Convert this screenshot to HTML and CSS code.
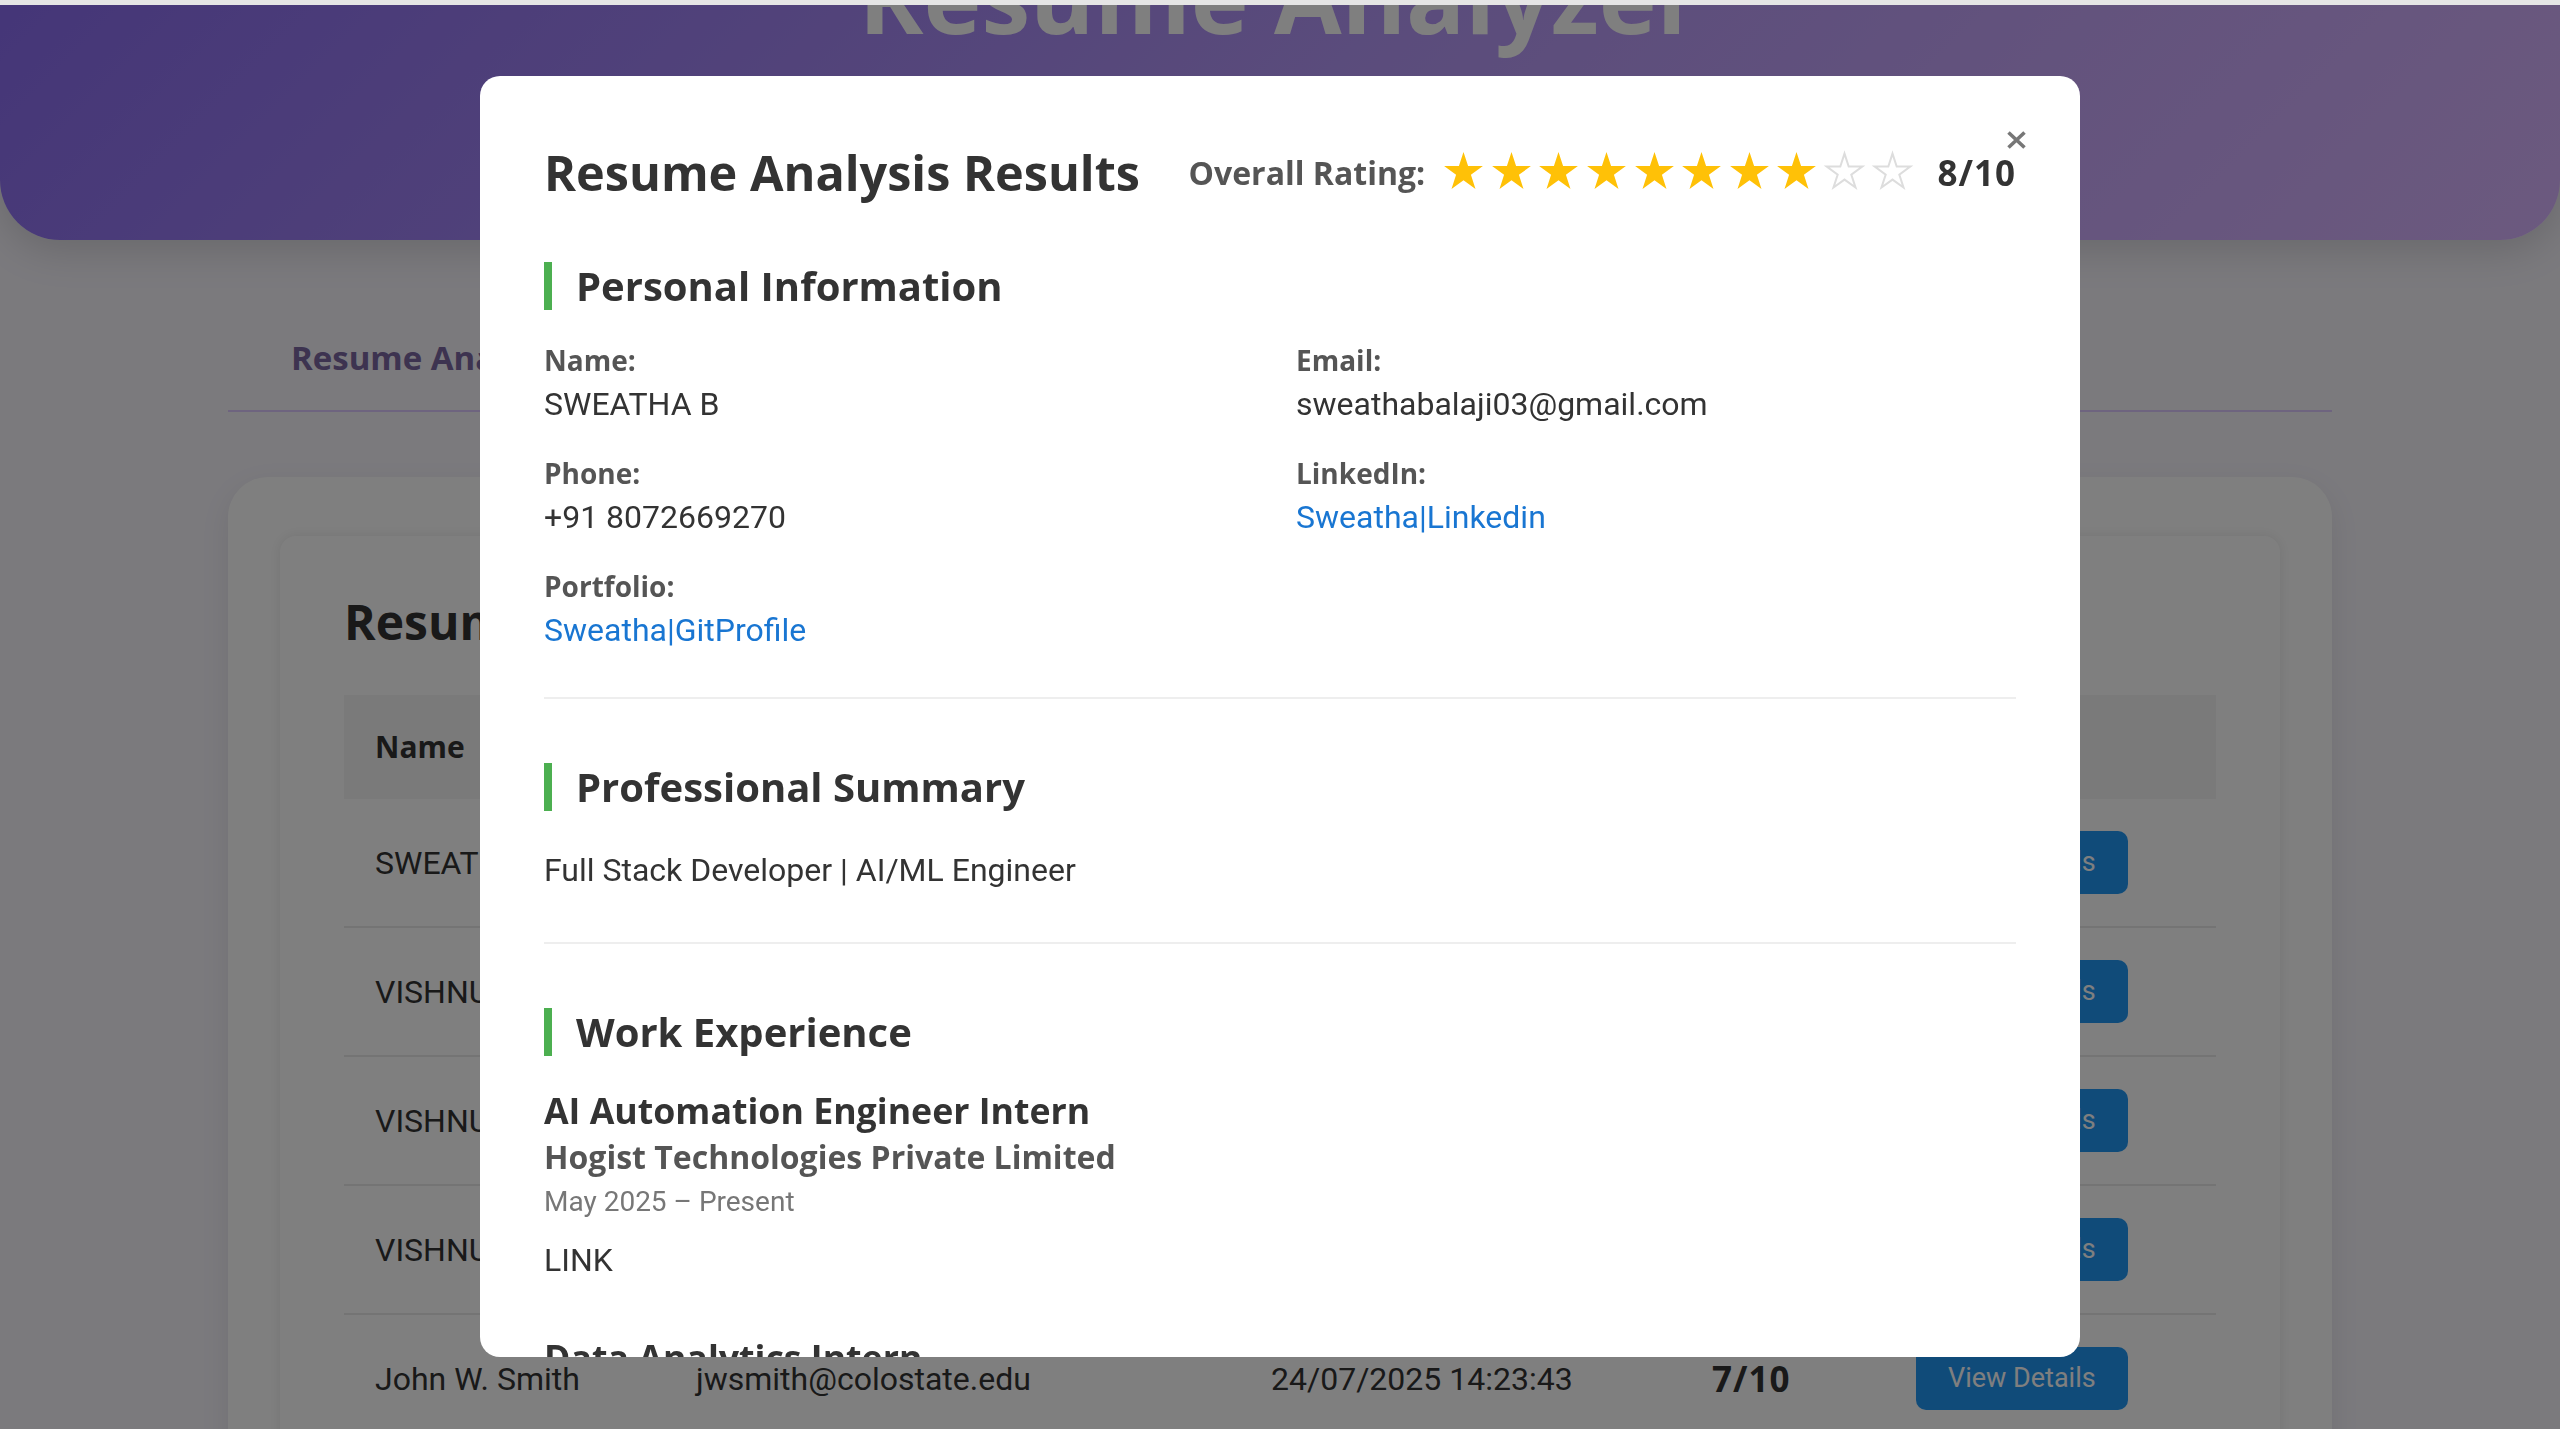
FILE: index.html
```html
<!DOCTYPE html>
<html lang="en">
<head>
<meta charset="utf-8">
<title>Resume Analyzer</title>
<link rel="stylesheet" href="styles.css">
</head>
<body>
<div class="topstrip"></div>
<header class="app-header">
  <h1 class="app-title">Resume Analyzer</h1>
</header>
<main class="container">
  <nav class="tabs">
    <button class="tab active">Resume Analysis</button>
    <button class="tab">History</button>
  </nav>
  <section class="card">
    <div class="panel">
      <h2 class="panel-title">Resume History</h2>
      <table class="history">
        <colgroup>
          <col class="c-name"><col class="c-email"><col class="c-date"><col class="c-rating"><col class="c-actions">
        </colgroup>
        <thead>
          <tr><th>Name</th><th>Email</th><th>Date</th><th>Rating</th><th>Actions</th></tr>
        </thead>
        <tbody>
          <tr><td>SWEATHA B</td><td>sweathabalaji03@gmail.com</td><td>24/07/2025 15:10:22</td><td class="score">8/10</td><td><button class="btn">View Details</button></td></tr>
          <tr><td>VISHNU R</td><td>vishnur@gmail.com</td><td>24/07/2025 14:58:10</td><td class="score">7/10</td><td><button class="btn">View Details</button></td></tr>
          <tr><td>VISHNU R</td><td>vishnur@gmail.com</td><td>24/07/2025 14:51:37</td><td class="score">7/10</td><td><button class="btn">View Details</button></td></tr>
          <tr><td>VISHNU R</td><td>vishnur@gmail.com</td><td>24/07/2025 14:40:05</td><td class="score">7/10</td><td><button class="btn">View Details</button></td></tr>
          <tr><td>John W. Smith</td><td>jwsmith@colostate.edu</td><td>24/07/2025 14:23:43</td><td class="score">7/10</td><td><button class="btn">View Details</button></td></tr>
        </tbody>
      </table>
    </div>
  </section>
</main>

<div class="overlay">
  <div class="modal">
    <button class="close" aria-label="Close">
      <svg width="19" height="18" viewBox="0 0 19 18"><path d="M1.5 1.5 L17.5 16.5 M17.5 1.5 L1.5 16.5" stroke="#777" stroke-width="3.6" fill="none"/></svg>
    </button>
    <div class="modal-head">
      <h2 class="modal-title">Resume Analysis Results</h2>
      <div class="rating">
        <span class="rating-label">Overall Rating:</span>
        <div class="stars">
          <svg class="star full" viewBox="0 0 39 37"><polygon points="19.5,0 24.08,14.09 38.9,14.1 26.92,22.81 31.49,36.9 19.5,28.2 7.51,36.9 12.08,22.81 0.1,14.1 14.92,14.09"/></svg>
          <svg class="star full" viewBox="0 0 39 37"><polygon points="19.5,0 24.08,14.09 38.9,14.1 26.92,22.81 31.49,36.9 19.5,28.2 7.51,36.9 12.08,22.81 0.1,14.1 14.92,14.09"/></svg>
          <svg class="star full" viewBox="0 0 39 37"><polygon points="19.5,0 24.08,14.09 38.9,14.1 26.92,22.81 31.49,36.9 19.5,28.2 7.51,36.9 12.08,22.81 0.1,14.1 14.92,14.09"/></svg>
          <svg class="star full" viewBox="0 0 39 37"><polygon points="19.5,0 24.08,14.09 38.9,14.1 26.92,22.81 31.49,36.9 19.5,28.2 7.51,36.9 12.08,22.81 0.1,14.1 14.92,14.09"/></svg>
          <svg class="star full" viewBox="0 0 39 37"><polygon points="19.5,0 24.08,14.09 38.9,14.1 26.92,22.81 31.49,36.9 19.5,28.2 7.51,36.9 12.08,22.81 0.1,14.1 14.92,14.09"/></svg>
          <svg class="star full" viewBox="0 0 39 37"><polygon points="19.5,0 24.08,14.09 38.9,14.1 26.92,22.81 31.49,36.9 19.5,28.2 7.51,36.9 12.08,22.81 0.1,14.1 14.92,14.09"/></svg>
          <svg class="star full" viewBox="0 0 39 37"><polygon points="19.5,0 24.08,14.09 38.9,14.1 26.92,22.81 31.49,36.9 19.5,28.2 7.51,36.9 12.08,22.81 0.1,14.1 14.92,14.09"/></svg>
          <svg class="star full" viewBox="0 0 39 37"><polygon points="19.5,0 24.08,14.09 38.9,14.1 26.92,22.81 31.49,36.9 19.5,28.2 7.51,36.9 12.08,22.81 0.1,14.1 14.92,14.09"/></svg>
          <svg class="star empty" viewBox="0 0 39 37"><polygon points="19.5,1.6 23.7,14.6 37.3,14.6 26.3,22.6 30.5,35.5 19.5,27.6 8.5,35.5 12.7,22.6 1.7,14.6 15.3,14.6"/></svg>
          <svg class="star empty" viewBox="0 0 39 37"><polygon points="19.5,1.6 23.7,14.6 37.3,14.6 26.3,22.6 30.5,35.5 19.5,27.6 8.5,35.5 12.7,22.6 1.7,14.6 15.3,14.6"/></svg>
        </div>
        <span class="rating-score">8/10</span>
      </div>
    </div>

    <section class="msec">
      <h3 class="msec-title">Personal Information</h3>
      <div class="info-grid">
        <div class="info"><span class="label">Name:</span><span class="value">SWEATHA B</span></div>
        <div class="info"><span class="label">Email:</span><span class="value">sweathabalaji03@gmail.com</span></div>
        <div class="info"><span class="label">Phone:</span><span class="value">+91 8072669270</span></div>
        <div class="info"><span class="label">LinkedIn:</span><a class="value link" href="#">Sweatha|Linkedin</a></div>
        <div class="info"><span class="label">Portfolio:</span><a class="value link" href="#">Sweatha|GitProfile</a></div>
      </div>
    </section>

    <section class="msec summary-sec">
      <h3 class="msec-title">Professional Summary</h3>
      <p class="summary">Full Stack Developer | AI/ML Engineer</p>
    </section>

    <section class="msec">
      <h3 class="msec-title">Work Experience</h3>
      <div class="job">
        <div class="job-title">AI Automation Engineer Intern</div>
        <div class="company">Hogist Technologies Private Limited</div>
        <div class="dates">May 2025 – Present</div>
        <div class="job-desc">LINK</div>
      </div>
      <div class="job">
        <div class="job-title">Data Analytics Intern</div>
        <div class="company">Analytics Company</div>
        <div class="dates">Jan 2025 – Apr 2025</div>
        <div class="job-desc">LINK</div>
      </div>
    </section>
  </div>
</div>
</body>
</html>
```

FILE: styles.css
```css
* { box-sizing: border-box; }

html, body {
  margin: 0;
  padding: 0;
  height: 100%;
  overflow: hidden;
}

body {
  background: #f6f4fb;
  font-family: Roboto, "Liberation Sans", sans-serif;
  font-size: 32px;
  color: #333;
}

/* bold text uses a wider face, like the original UI font */
.app-title, .tab, .panel-title, .history th, .history td.score,
.modal-title, .rating-label, .rating-score, .msec-title, .label,
.job-title, .company {
  font-family: "Open Sans", Roboto, sans-serif;
  font-weight: 700;
}

.topstrip {
  position: fixed;
  top: 0;
  left: 0;
  right: 0;
  height: 5px;
  background: #e5e5e5;
  z-index: 30;
}

/* ---------- background page ---------- */
.app-header {
  display: flow-root;
  height: 240px;
  background: linear-gradient(135deg, #8a6cf0 0%, #b598f8 50%, #d8b4fe 100%);
  border-radius: 0 0 60px 60px;
  box-shadow: 0 10px 40px rgba(0, 0, 0, 0.15);
  text-align: center;
  color: #fff;
}

.app-title {
  margin: -54px 0 0;
  font-size: 98px;
  line-height: 100px;
}

.container {
  width: 2104px;
  margin: 0 auto;
}

.tabs {
  display: flex;
  margin-top: 66px;
  border-bottom: 2px solid #dcc8ff;
}

.tab {
  background: none;
  border: none;
  font-size: 33px;
  line-height: 48px;
  color: #7a66a0;
  padding: 28px 63px;
}

.card {
  margin-top: 65px;
  background: #fff;
  border-radius: 40px;
  padding: 59px 52px 0;
  box-shadow: 0 10px 30px rgba(0, 0, 0, 0.08);
}

.panel {
  background: #fff;
  border-radius: 16px;
  box-shadow: 0 0 14px rgba(0, 0, 0, 0.09);
  padding: 55px 64px 64px;
}

.panel-title {
  margin: 0 0 43px;
  font-size: 48px;
  line-height: 61px;
  color: #333;
}

.history {
  width: 100%;
  border-collapse: collapse;
  table-layout: fixed;
}

.c-name { width: 321px; }
.c-email { width: 575px; }
.c-date { width: 441px; }
.c-rating { width: 204px; }
.c-actions { width: 331px; }

.history th {
  background: #f4f4f4;
  text-align: left;
  padding: 32px 31px;
  font-size: 30px;
  line-height: 40px;
  color: #333;
}

.history td {
  padding: 32px 31px;
  border-bottom: 2px solid #e8e8e8;
  font-size: 32px;
  line-height: 40px;
  color: #333;
  vertical-align: middle;
  white-space: nowrap;
}

.history td.score {
  font-size: 35px;
  letter-spacing: 1px;
}

.btn {
  display: block;
  height: 63px;
  padding: 0 32px;
  background: #2196f3;
  color: #fff;
  border: none;
  border-radius: 10px;
  font-family: inherit;
  font-size: 27px;
  line-height: 63px;
}

/* ---------- modal ---------- */
.overlay {
  position: fixed;
  inset: 0;
  background: rgba(0, 0, 0, 0.5);
  display: flex;
  justify-content: center;
  align-items: flex-start;
  z-index: 10;
}

.modal {
  position: relative;
  margin-top: 76px;
  width: 1600px;
  height: 1281px;
  background: #fff;
  border-radius: 20px;
  padding: 64px 64px 0;
  overflow: hidden;
}

.close {
  position: absolute;
  top: 55px;
  right: 54px;
  width: 19px;
  height: 18px;
  padding: 0;
  border: none;
  background: none;
  display: flex;
}

.modal-head {
  display: flex;
  justify-content: space-between;
  align-items: center;
  height: 64px;
  margin-bottom: 58px;
}

.modal-title {
  margin: 0;
  font-size: 48.6px;
  line-height: 64px;
  color: #333;
}

.rating {
  display: flex;
  align-items: center;
}

.rating-label {
  font-size: 32px;
  color: #555;
  margin-right: 19px;
}

.stars {
  display: flex;
  gap: 8.6px;
  margin-top: -3px;
}

.star {
  width: 39px;
  height: 37px;
  overflow: visible;
}

.star.full polygon { fill: #ffc107; }
.star.empty polygon { fill: none; stroke: #dddddd; stroke-width: 2; }

.rating-score {
  margin-left: 26px;
  font-size: 35px;
  letter-spacing: 1px;
  color: #333;
}

.msec {
  border-bottom: 2px solid #eee;
  margin-bottom: 64px;
  padding-bottom: 43px;
}

.summary-sec { padding-bottom: 48px; }

.msec-title {
  margin: 0 0 32px;
  border-left: 8px solid #4caf50;
  padding-left: 24px;
  font-size: 40px;
  line-height: 48px;
  color: #333;
}

.info-grid {
  display: grid;
  grid-template-columns: 1fr 1fr;
  column-gap: 32px;
  row-gap: 25px;
  margin-top: -2px;
}

.info {
  display: flex;
  flex-direction: column;
}

.label {
  font-size: 28px;
  line-height: 40px;
  color: #555;
}

.value {
  font-size: 32px;
  line-height: 48px;
  color: #333;
}

.link {
  color: #1976d2;
  text-decoration: none;
  align-self: flex-start;
}

.summary {
  margin: 35px 0 0;
  font-size: 32px;
  line-height: 48px;
  color: #333;
}

.summary-sec .msec-title { margin-bottom: 0; }

.job { margin-top: 1px; }
.job + .job { margin-top: 51px; }

.job-title {
  font-size: 35.7px;
  line-height: 44px;
  color: #333;
}

.company {
  margin-top: 3px;
  font-size: 32px;
  line-height: 44px;
  color: #555;
}

.dates {
  margin-top: 3px;
  font-size: 28px;
  line-height: 40px;
  color: #777;
}

.job-desc {
  margin-top: 14px;
  font-size: 32px;
  line-height: 48px;
  color: #333;
}
```
